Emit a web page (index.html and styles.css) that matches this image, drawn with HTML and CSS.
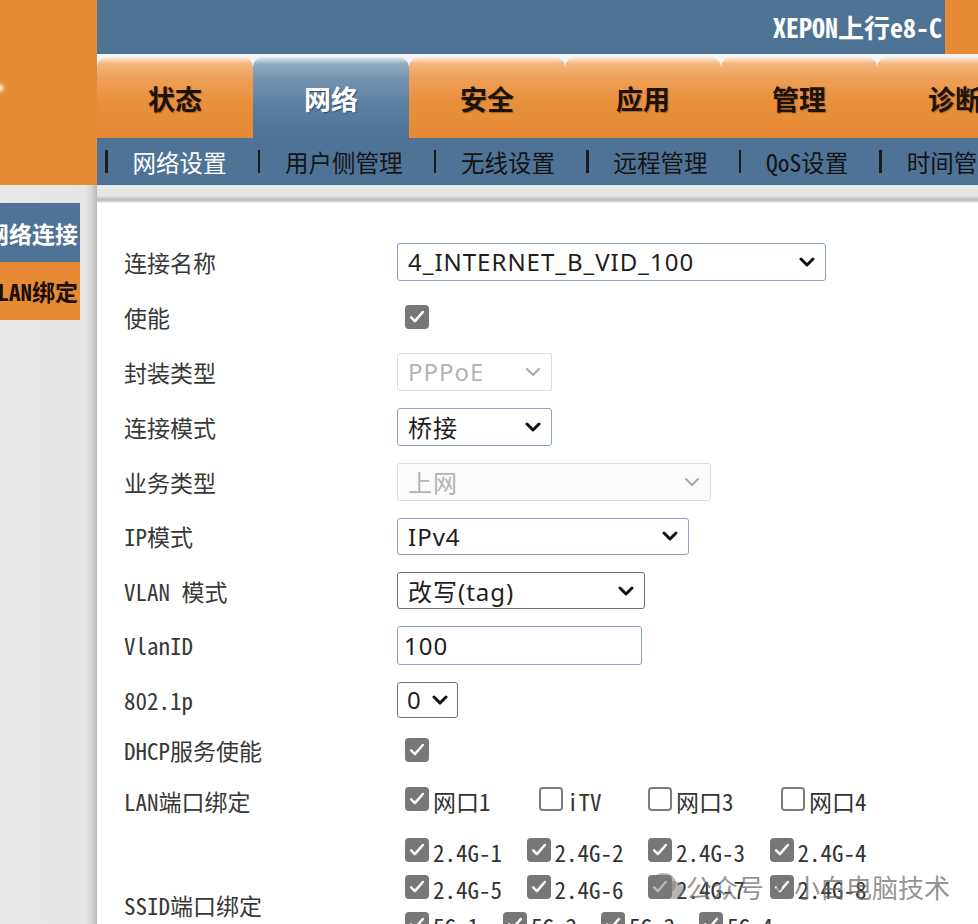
FILE: index.html
```html
<!DOCTYPE html>
<html lang="zh-CN">
<head>
<meta charset="utf-8">
<title>XEPON上行e8-C</title>
<link rel="stylesheet" href="styles.css">
</head>
<body>
<div class="page">
  <aside class="side">
    <div class="side-top"></div>
    <div class="side-body">
      <div class="side-item active"><span>网络连接</span></div>
      <div class="side-item alt"><span>VLAN绑定</span></div>
    </div>
  </aside>

  <div class="main">
    <header class="banner">
      <span class="model">XEPON上行e8-C</span>
      <span class="corner"></span>
    </header>

    <nav class="tabs">
      <div class="tab">状态</div>
      <div class="tab current">网络</div>
      <div class="tab">安全</div>
      <div class="tab">应用</div>
      <div class="tab">管理</div>
      <div class="tab">诊断</div>
    </nav>

    <nav class="subnav">
      <span class="sep"></span><span class="link current">网络设置</span>
      <span class="sep"></span><span class="link">用户侧管理</span>
      <span class="sep"></span><span class="link">无线设置</span>
      <span class="sep"></span><span class="link">远程管理</span>
      <span class="sep"></span><span class="link"><span class="mono">QoS</span>设置</span>
      <span class="sep"></span><span class="link">时间管理</span>
    </nav>

    <div class="band"></div>

    <section class="content">
      <div class="form">
        <div class="lbl">连接名称</div>
        <div class="ctrl">
          <div class="sel sel-name"><span>4_INTERNET_B_VID_100</span><svg class="chev" viewBox="0 0 16 10" width="16" height="10"><path d="M2 2L8 8L14 2"/></svg></div>
        </div>

        <div class="lbl">使能</div>
        <div class="ctrl"><span class="box on"><svg viewBox="0 0 24 24" width="20" height="20"><path d="M5 12.5l4.5 4.5L19 6"/></svg></span></div>

        <div class="lbl">封装类型</div>
        <div class="ctrl">
          <div class="sel sel-sm off"><span>PPPoE</span><svg class="chev" viewBox="0 0 16 10" width="16" height="10"><path d="M2 2L8 8L14 2"/></svg></div>
        </div>

        <div class="lbl">连接模式</div>
        <div class="ctrl">
          <div class="sel sel-sm"><span>桥接</span><svg class="chev" viewBox="0 0 16 10" width="16" height="10"><path d="M2 2L8 8L14 2"/></svg></div>
        </div>

        <div class="lbl">业务类型</div>
        <div class="ctrl">
          <div class="sel sel-svc off soft"><span>上网</span><svg class="chev" viewBox="0 0 16 10" width="16" height="10"><path d="M2 2L8 8L14 2"/></svg></div>
        </div>

        <div class="lbl">IP模式</div>
        <div class="ctrl">
          <div class="sel sel-ip"><span>IPv4</span><svg class="chev" viewBox="0 0 16 10" width="16" height="10"><path d="M2 2L8 8L14 2"/></svg></div>
        </div>

        <div class="lbl">VLAN 模式</div>
        <div class="ctrl">
          <div class="sel sel-vlan dark"><span>改写(tag)</span><svg class="chev" viewBox="0 0 16 10" width="16" height="10"><path d="M2 2L8 8L14 2"/></svg></div>
        </div>

        <div class="lbl">VlanID</div>
        <div class="ctrl"><div class="input">100</div></div>

        <div class="lbl">802.1p</div>
        <div class="ctrl">
          <div class="sel sel-pri dark"><span>0</span><svg class="chev" viewBox="0 0 16 10" width="16" height="10"><path d="M2 2L8 8L14 2"/></svg></div>
        </div>

        <div class="lbl">DHCP服务使能</div>
        <div class="ctrl"><span class="box on"><svg viewBox="0 0 24 24" width="20" height="20"><path d="M5 12.5l4.5 4.5L19 6"/></svg></span></div>

        <div class="lbl">LAN端口绑定</div>
        <div class="lan">
          <label class="cb"><span class="box on"><svg viewBox="0 0 24 24" width="20" height="20"><path d="M5 12.5l4.5 4.5L19 6"/></svg></span>网口1</label>
          <label class="cb"><span class="box off"></span>iTV</label>
          <label class="cb"><span class="box off"></span>网口3</label>
          <label class="cb"><span class="box off"></span>网口4</label>
        </div>

        <div class="lbl">SSID端口绑定</div>
        <div class="ssid">
          <div class="ssid-row">
            <label class="cb"><span class="box on"><svg viewBox="0 0 24 24" width="20" height="20"><path d="M5 12.5l4.5 4.5L19 6"/></svg></span>2.4G-1</label>
            <label class="cb"><span class="box on"><svg viewBox="0 0 24 24" width="20" height="20"><path d="M5 12.5l4.5 4.5L19 6"/></svg></span>2.4G-2</label>
            <label class="cb"><span class="box on"><svg viewBox="0 0 24 24" width="20" height="20"><path d="M5 12.5l4.5 4.5L19 6"/></svg></span>2.4G-3</label>
            <label class="cb"><span class="box on"><svg viewBox="0 0 24 24" width="20" height="20"><path d="M5 12.5l4.5 4.5L19 6"/></svg></span>2.4G-4</label>
          </div>
          <div class="ssid-row">
            <label class="cb"><span class="box on"><svg viewBox="0 0 24 24" width="20" height="20"><path d="M5 12.5l4.5 4.5L19 6"/></svg></span>2.4G-5</label>
            <label class="cb"><span class="box on"><svg viewBox="0 0 24 24" width="20" height="20"><path d="M5 12.5l4.5 4.5L19 6"/></svg></span>2.4G-6</label>
            <label class="cb"><span class="box on"><svg viewBox="0 0 24 24" width="20" height="20"><path d="M5 12.5l4.5 4.5L19 6"/></svg></span>2.4G-7</label>
            <label class="cb"><span class="box on"><svg viewBox="0 0 24 24" width="20" height="20"><path d="M5 12.5l4.5 4.5L19 6"/></svg></span>2.4G-8</label>
          </div>
          <div class="ssid-row g5">
            <label class="cb"><span class="box on"><svg viewBox="0 0 24 24" width="20" height="20"><path d="M5 12.5l4.5 4.5L19 6"/></svg></span>5G-1</label>
            <label class="cb"><span class="box on"><svg viewBox="0 0 24 24" width="20" height="20"><path d="M5 12.5l4.5 4.5L19 6"/></svg></span>5G-2</label>
            <label class="cb"><span class="box on"><svg viewBox="0 0 24 24" width="20" height="20"><path d="M5 12.5l4.5 4.5L19 6"/></svg></span>5G-3</label>
            <label class="cb"><span class="box on"><svg viewBox="0 0 24 24" width="20" height="20"><path d="M5 12.5l4.5 4.5L19 6"/></svg></span>5G-4</label>
          </div>
          <div class="ssid-row g5">
            <label class="cb"><span class="box on"><svg viewBox="0 0 24 24" width="20" height="20"><path d="M5 12.5l4.5 4.5L19 6"/></svg></span>5G-5</label>
            <label class="cb"><span class="box on"><svg viewBox="0 0 24 24" width="20" height="20"><path d="M5 12.5l4.5 4.5L19 6"/></svg></span>5G-6</label>
            <label class="cb"><span class="box on"><svg viewBox="0 0 24 24" width="20" height="20"><path d="M5 12.5l4.5 4.5L19 6"/></svg></span>5G-7</label>
            <label class="cb"><span class="box on"><svg viewBox="0 0 24 24" width="20" height="20"><path d="M5 12.5l4.5 4.5L19 6"/></svg></span>5G-8</label>
          </div>
        </div>
      </div>
    </section>
  </div>

  <div class="watermark">
    <svg class="wx" viewBox="0 0 40 34" width="36" height="31">
      <ellipse cx="15" cy="14" rx="14" ry="12"/>
      <ellipse cx="26" cy="21" rx="12" ry="10"/>
      <path d="M6 24l-2 6 7-4z"/>
    </svg>
    <span>公众号</span><span class="dot">·</span><span>小白电脑技术</span>
  </div>
</div>
</body>
</html>
```
FILE: styles.css
```css
* { box-sizing: border-box; }

html, body { margin: 0; padding: 0; }

body {
  width: 978px;
  height: 924px;
  overflow: hidden;
  background: #e8e8e8;
  font-family: "Noto Sans CJK SC", sans-serif;
}

.page {
  --song: "Noto Sans Mono CJK SC", "Liberation Mono", "Noto Sans CJK SC", monospace;
  position: relative;
  display: grid;
  grid-template-columns: 97px 881px;
  height: 924px;
}

/* left column */
.side { display: flex; flex-direction: column; }

.side-top {
  height: 185px;
  background:
    radial-gradient(circle at 0 88px, rgba(255,255,255,.95) 0, rgba(255,255,255,0) 6px),
    #e68a34;
}

.side-body {
  flex: 1;
  padding-top: 18px;
  background: linear-gradient(to right, #e8e8e8 0, #e6e6e6 86px, #d2d2d2 92px, #b8b8b8 97px);
}

.side-item {
  width: 80px;
  display: flex;
  justify-content: flex-end;
  align-items: center;
  overflow: hidden;
  white-space: nowrap;
  padding-right: 2px;
  font: bold 23px var(--song);
}
.side-item span { flex: none; }
.side-item.active { height: 59px; background: #4f7396; color: #fff; }
.side-item.alt { height: 58px; background: #e68a34; color: #1a0e05; }

/* main column */
.main {
  display: flex;
  flex-direction: column;
  min-width: 0;
  background: #fff;
}

.banner {
  height: 54px;
  flex: none;
  background: #4e7395;
  display: flex;
  justify-content: flex-end;
  align-items: center;
}
.model {
  color: #fff;
  font: bold 26px var(--song);
  margin-right: 3px;
  padding-bottom: 2px;
}
.corner {
  width: 33px;
  align-self: stretch;
  background: #e68a34;
}

.tabs {
  height: 84px;
  flex: none;
  padding-top: 3px;
  background: #f2f4f6;
  display: flex;
  overflow: hidden;
}
.tab {
  flex: 0 0 156px;
  border-radius: 10px 10px 0 0;
  display: flex;
  align-items: center;
  justify-content: center;
  padding-top: 1px;
  font-size: 27px;
  font-weight: bold;
  color: #1c1208;
  text-shadow: 1px 1px 1px rgba(60,30,0,.35);
  background: linear-gradient(to bottom, #fcefe2 0, #f3b57c 7px, #ee9f56 22px, #e8903c 45px, #e68a34 100%);
}
.tab.current {
  color: #fff;
  text-shadow: 1px 1px 1px rgba(20,40,70,.6);
  background: linear-gradient(to bottom, #e4ebf2 0, #93acc4 7px, #7593b0 22px, #5a7ea0 50px, #4f7396 100%);
}

.subnav {
  height: 47px;
  flex: none;
  background: #4f7396;
  display: flex;
  align-items: center;
  padding-left: 8px;
  white-space: nowrap;
  overflow: hidden;
  font-size: 23.5px;
  color: #141414;
}
.subnav .sep {
  flex: none;
  width: 2.5px;
  height: 23px;
  background: #1b1b1b;
}
.subnav .link { flex: none; margin: 0 31px 0 25px; }
.subnav .link.current { color: #fff; }
.mono { font-family: var(--song); }

.band {
  height: 18px;
  flex: none;
  background: linear-gradient(to bottom, #e9e9e9 0, #e5e5e5 11px, #cdcdcd 13px, #bcbcbc 15px, #dadada 17px, #fff 18px);
}

.content {
  flex: 1;
  background: #fff;
  padding: 31px 0 0 27px;
}

.form {
  display: grid;
  grid-template-columns: 273px 1fr;
  grid-template-rows: 55px 55px 55px 55px 55px 54px 55px 54px 55px 46px 56px auto;
  align-items: center;
}

.lbl {
  font: 23px var(--song);
  color: #383838;
  white-space: nowrap;
}

.ctrl { display: flex; align-items: center; }

.sel, .input {
  display: flex;
  align-items: center;
  justify-content: space-between;
  height: 38px;
  padding: 0 10px 0 10px;
  border: 1.5px solid #8ba3c2;
  border-radius: 3px;
  background: #fff;
  font: 24px "Noto Sans", "Noto Sans CJK SC", sans-serif;
  letter-spacing: 1px;
  color: #1e1e1e;
  white-space: nowrap;
}
.sel-name { width: 429px; }
.sel-sm { width: 155px; }
.sel-svc { width: 314px; }
.sel-ip { width: 292px; height: 37px; }
.sel-vlan { width: 248px; height: 37px; }
.sel-pri { width: 61px; height: 36px; padding: 0 9px 0 9px; }
.input { width: 245px; height: 39px; padding-left: 6px; }

.sel.dark { border-color: #6f6f6f; }
.sel.off { border-color: #dcdcdc; color: #b3b3b3; }
.sel.soft { background: #fbfbfb; }

.chev { flex: none; }
.chev path {
  fill: none;
  stroke: #111;
  stroke-width: 3;
  stroke-linecap: round;
  stroke-linejoin: round;
}
.sel.off .chev path { stroke: #a8a8a8; stroke-width: 2; }

.box {
  flex: none;
  width: 24px;
  height: 24px;
  border-radius: 4px;
  display: inline-flex;
  align-items: center;
  justify-content: center;
}
.ctrl > .box { margin-left: 8px; }
.box.on { background: #777; }
.box.off { background: #fff; border: 2px solid #7c7c7c; }
.box svg path {
  fill: none;
  stroke: #fff;
  stroke-width: 3;
  stroke-linecap: round;
  stroke-linejoin: round;
}

.cb {
  display: flex;
  align-items: center;
  gap: 4px;
  font: 23px var(--song);
  color: #333;
  white-space: nowrap;
}
.cb .box { position: relative; top: -2px; }

.lan {
  display: grid;
  grid-template-columns: 134px 109px 133px auto;
  padding-left: 8px;
}

.ssid {
  padding-top: 4px;
  display: flex;
  flex-direction: column;
}
.ssid-row {
  height: 37px;
  display: grid;
  grid-template-columns: repeat(4, 121.5px);
  align-items: center;
  padding-left: 8px;
}
.ssid-row.g5 { grid-template-columns: repeat(4, 98px); }

.watermark {
  position: absolute;
  left: 650px;
  top: 868px;
  display: flex;
  align-items: center;
  font-size: 26px;
  color: rgba(105,105,105,.72);
  pointer-events: none;
}
.watermark .wx { margin-right: 0; }
.watermark .dot { width: 30px; text-align: center; }
.wx { fill: rgba(120,120,120,.55); }
```
